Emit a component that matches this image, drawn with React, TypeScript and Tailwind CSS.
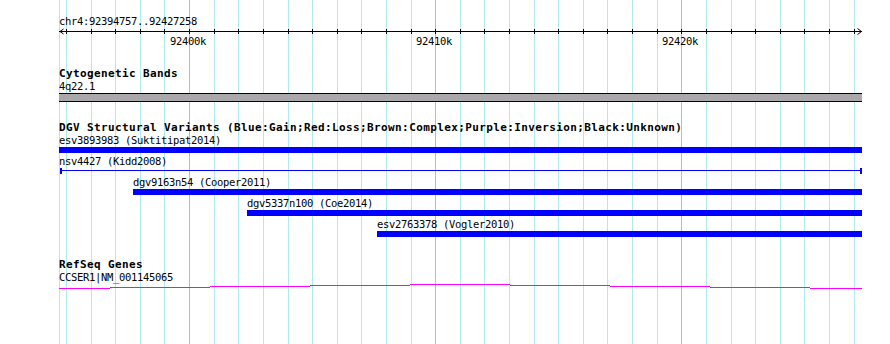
import React from 'react';

// grid line x positions (1 kb apart), majors every 10 kb
const gridX = [
  59, 66, 91, 115, 140, 164, 189, 214, 238, 263, 288, 312, 337, 361, 386, 411, 435,
  460, 484, 509, 534, 558, 583, 607, 632, 657, 681, 706, 731, 755, 780, 804, 829, 854,
];
const majors = [189, 435, 681];

const variants = [
  { id: 'esv3893983', study: 'Suktitipat2014', box: 'ml-[59px] w-[803px]', gap: 'mt-0' },
  { id: 'dgv9163n54', study: 'Cooper2011', box: 'ml-[133px] w-[729px]', gap: 'mt-[2px]' },
  { id: 'dgv5337n100', study: 'Coe2014', box: 'ml-[247px] w-[615px]', gap: 'mt-[2px]' },
  { id: 'esv2763378', study: 'Vogler2010', box: 'ml-[377px] w-[485px]', gap: 'mt-[2px]' },
];

// intron "hat" of the RefSeq gene, drawn as 1px steps
const hat = [
  [59, 110, 5], [110, 210, 4], [210, 310, 3], [310, 410, 2], [410, 510, 1],
  [510, 610, 2], [610, 710, 3], [710, 810, 4], [810, 862, 5],
];

const Grid: React.FC = () => (
  <svg className="absolute inset-0 pointer-events-none" width={890} height={344} shapeRendering="crispEdges">
    {gridX.map((x) => (
      <rect key={x} x={x} y={0} width={1} height={344} fill={majors.includes(x) ? '#8ccbe6' : '#aeeaee'} />
    ))}
  </svg>
);

const Ruler: React.FC = () => (
  <svg width={890} height={7} className="block" shapeRendering="crispEdges">
    <rect x={59} y={3} width={803} height={1} fill="#000" />
    {gridX.slice(1).map((x) => (
      <rect key={x} x={x} y={1} width={1} height={5} fill="#000" />
    ))}
    <polyline points="63.5,1 60,3.5 63.5,6" fill="none" stroke="#000" strokeWidth={1} shapeRendering="auto" />
    <polyline points="857.5,0.5 861.5,3.5 857.5,6.5" fill="none" stroke="#000" strokeWidth={1} shapeRendering="auto" />
  </svg>
);

const TrackTitle: React.FC<{ children: React.ReactNode; className?: string }> = ({ children, className }) => (
  <div className={`pl-[59px] text-[11px] tracking-[0.38px] leading-[12px] h-[12px] font-bold whitespace-nowrap ${className ?? ''}`}>
    {children}
  </div>
);

const Label: React.FC<{ children: React.ReactNode; className?: string }> = ({ children, className }) => (
  <div className={`text-[10.5px] tracking-[-0.32px] leading-[12px] h-[12px] whitespace-nowrap ${className ?? ''}`}>
    {children}
  </div>
);

export default function App() {
  return (
    <div className="relative w-[890px] h-[344px] overflow-hidden bg-white text-black font-['DejaVu_Sans_Mono',monospace]">
      <Grid />
      <div className="relative flex flex-col">
        {/* ruler */}
        <div className="pt-[15px] pl-[59px] text-[10.5px] tracking-[-0.32px] leading-[13px] h-[28px] whitespace-nowrap">
          chr4:92394757..92427258
        </div>
        <Ruler />
        <div className="flex pl-[170px] gap-[210px] text-[10.5px] tracking-[-0.32px] leading-[13px] h-[13px]">
          <span className="w-[36px] whitespace-nowrap">92400k</span>
          <span className="w-[36px] whitespace-nowrap">92410k</span>
          <span className="w-[36px] whitespace-nowrap">92420k</span>
        </div>

        {/* cytogenetic bands */}
        <TrackTitle className="mt-[20px]">Cytogenetic Bands</TrackTitle>
        <Label className="pl-[59px]">4q22.1</Label>
        <div className="mt-[1px] ml-[59px] w-[803px] h-[9px] border-y border-black bg-[#aaa8aa]" />

        {/* DGV */}
        <TrackTitle className="mt-[20px]">
          DGV Structural Variants (Blue:Gain;Red:Loss;Brown:Complex;Purple:Inversion;Black:Unknown)
        </TrackTitle>
        <div className={`${variants[0].box}`}>
          <Label>{`${variants[0].id} (${variants[0].study})`}</Label>
          <div className="mt-[1px] h-[6px] bg-[#0000ff]" />
        </div>
        <div className="ml-[59px] w-[803px] mt-[2px]">
          <Label>nsv4427 (Kidd2008)</Label>
          <svg width={803} height={7} className="block" shapeRendering="crispEdges">
            <rect x={1} y={3} width={802} height={1} fill="#0000ff" />
            <rect x={1} y={1} width={2} height={6} fill="#0000ff" />
            <rect x={801} y={1} width={2} height={6} fill="#0000ff" />
          </svg>
        </div>
        {variants.slice(1).map((v) => (
          <div key={v.id} className={`${v.box} ${v.gap}`}>
            <Label>{`${v.id} (${v.study})`}</Label>
            <div className="mt-[1px] h-[6px] bg-[#0000ff]" />
          </div>
        ))}

        {/* RefSeq */}
        <TrackTitle className="mt-[22px]">RefSeq Genes</TrackTitle>
        <Label className="pl-[59px]">CCSER1|NM_001145065</Label>
        <svg width={890} height={6} className="block" shapeRendering="crispEdges">
          {hat.map(([a, b, y]) => (
            <rect key={a} x={a} y={y} width={b - a} height={1} fill="#ff00ff" />
          ))}
        </svg>
      </div>
    </div>
  );
}
